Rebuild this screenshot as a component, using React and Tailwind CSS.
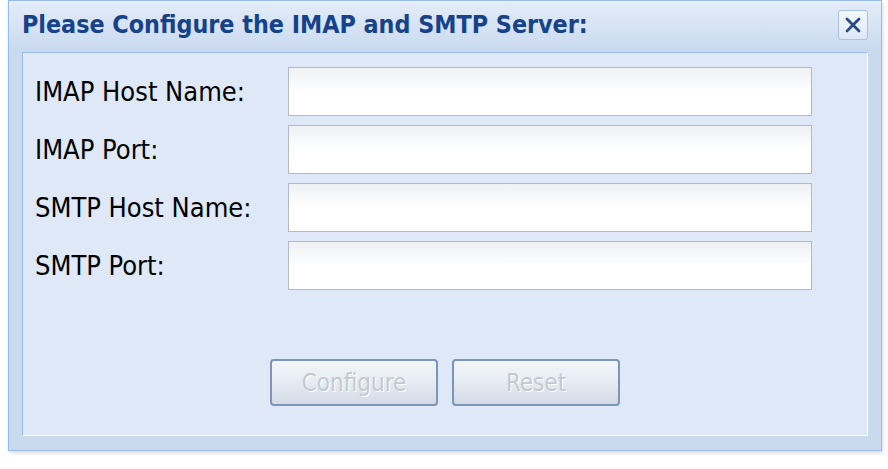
export default function App() {
  const fields = ["IMAP Host Name:", "IMAP Port:", "SMTP Host Name:", "SMTP Port:"];
  return (
    <div className="w-[888px] h-[469px] bg-white overflow-hidden" style={{ fontFamily: "'DejaVu Sans Condensed', 'DejaVu Sans', sans-serif" }}>
      <div className="ml-[8px] w-[874px] h-[451px] border border-[#99bbe8] bg-[#c9d9ee] shadow-[1px_2px_4px_rgba(0,0,0,0.15)] flex flex-col">
        {/* title bar */}
        <div className="h-[51px] flex items-center justify-between pl-[13px] pr-[13px] bg-gradient-to-b from-[#e4edf8] to-[#c8d9ef]">
          <span className="text-[24.8px] font-bold text-[#15428b] leading-none mt-[-3px]">
            Please Configure the IMAP and SMTP Server:
          </span>
          <button className="w-[30px] h-[30px] mt-[-4px] rounded-[3px] border border-[#a8c2e4] bg-gradient-to-b from-[#f4f8fd] to-[#dce8f7] flex items-center justify-center">
            <svg width="20" height="20" viewBox="0 0 20 20">
              <path d="M4 4 L16 16 M16 4 L4 16" stroke="#2a4a85" strokeWidth="2.8" strokeLinecap="round" />
            </svg>
          </button>
        </div>
        {/* form body */}
        <div className="mx-[13px] h-[384px] border border-t-[#99bbe8] border-l-[#99bbe8] border-r-white border-b-white bg-[#dfe8f6] flex flex-col">
          <div className="flex flex-col gap-[9px] pt-[14px]">
            {fields.map((f) => (
              <div key={f} className="flex items-center h-[49px]">
                <label className="w-[265px] pl-[12px] text-[27px] leading-none text-black">{f}</label>
                <div className="w-[524px] h-[49px] border border-[#b5b8c8] bg-gradient-to-b from-[#eef0f2] via-white to-white" />
              </div>
            ))}
          </div>
          <div className="flex gap-[14px] pl-[247px] mt-[69px]">
            {["Configure", "Reset"].map((b) => (
              <button
                key={b}
                className="w-[168px] h-[47px] rounded-[4px] border-2 border-[#7b95bb] bg-gradient-to-b from-[#f2f5fa] via-[#e6ebf3] to-[#d4dae4] text-[24px] leading-none text-[#c4c9d1] [text-shadow:1px_1px_0_#ffffff]"
              >
                {b}
              </button>
            ))}
          </div>
        </div>
      </div>
    </div>
  );
}
